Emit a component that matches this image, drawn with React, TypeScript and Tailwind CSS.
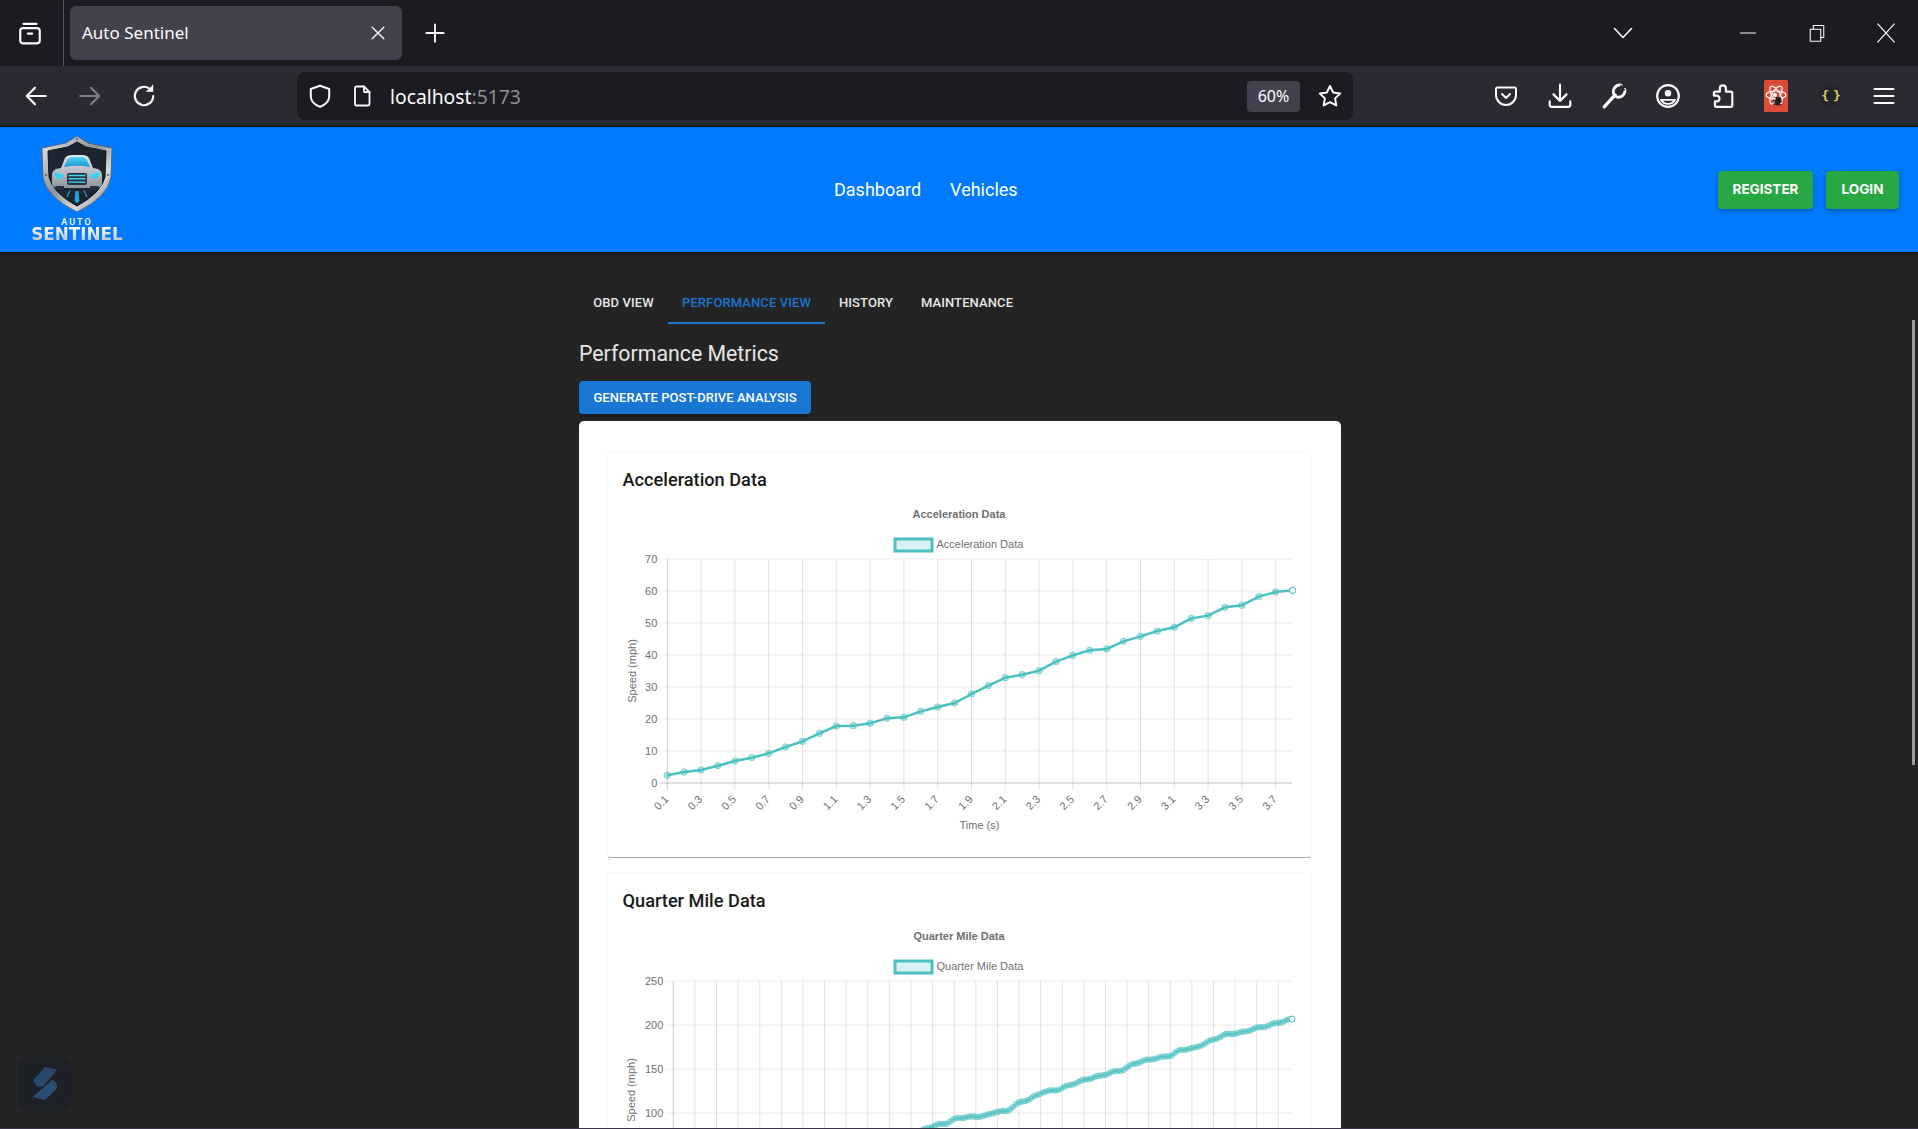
import type { ReactNode } from 'react'

const teal = 'rgb(75,192,192)'
const teal20 = 'rgba(75,192,192,0.2)'

// read off the reference, in page pixels
const accelY = [706, 696, 690, 677, 663, 653, 640, 621, 604, 580, 558, 557, 550, 535, 532, 514, 501, 489, 462, 437, 413, 404, 392, 365, 346, 331, 327, 304, 289, 273, 262, 235, 227, 202, 196, 170, 156, 151].map((v) => 540 + v / 3)
const accelPoints = accelY.map((y, i) => [667.3 + i * 16.9, y])

const quarterAnchors = [
  [905, 1140], [927, 1128], [937, 1125], [947, 1123], [957, 1118], [970, 1117], [985, 1116], [995, 1112], [1007, 1111],
  [1018, 1103], [1030, 1099], [1043, 1092], [1057, 1090], [1070, 1085], [1087, 1079], [1100, 1076], [1113, 1072], [1123, 1070],
  [1133, 1064], [1147, 1060], [1163, 1057], [1172, 1055], [1180, 1050], [1195, 1048], [1210, 1041], [1227, 1034], [1240, 1033],
  [1257, 1028], [1267, 1026], [1277, 1023], [1292, 1019],
]

function interpolate(anchors: number[][], step: number) {
  const out: number[][] = []
  for (let x = anchors[0][0]; x <= 1289; x += step) {
    const i = anchors.findIndex((a) => a[0] >= x)
    const b = anchors[Math.max(i, 1)]
    const a = anchors[Math.max(i, 1) - 1]
    const t = (x - a[0]) / (b[0] - a[0])
    // the real data wobbles a little from point to point
    out.push([x, a[1] + (b[1] - a[1]) * t + Math.sin(x * 1.7) * 0.6])
  }
  out.push([1292, 1019])
  return out
}

const quarterPoints = interpolate(quarterAnchors, 3)

interface ChartProps {
  top: number
  height: number
  labelTop: number
  title: string
  left: number
  yTicks: { label: string; y: number }[]
  xLines: number[]
  xLabels?: string[]
  bottom: number
  axisY: number
  points: number[][]
  lineWidth: number
  lineOpacity: number
  pointRadius: number
}

function LineChart({ top, height, labelTop, title, left, yTicks, xLines, xLabels, bottom, axisY, points, lineWidth, lineOpacity, pointRadius }: ChartProps) {
  const last = points[points.length - 1]
  return (
    <svg width={704} height={height} viewBox={`608 ${top} 704 ${height}`} className="block font-['Liberation_Sans',sans-serif]">
      <text x={959} y={labelTop + 13} textAnchor="middle" fontSize={11} fontWeight={700} fill="#707070">{title}</text>
      <rect x={895} y={labelTop + 34} width={37} height={12} fill={teal20} stroke={teal} strokeWidth={3} />
      <text x={936.5} y={labelTop + 43} fontSize={11} fill="#707070">{title}</text>

      {yTicks.map((t) => (
        <g key={t.label}>
          <line x1={left - 7} x2={1292} y1={t.y} y2={t.y} stroke="rgba(0,0,0,0.07)" />
          {t.y < 1120 && <text x={left - 10} y={t.y + 4} textAnchor="end" fontSize={11} fill="#707070">{t.label}</text>}
        </g>
      ))}
      {xLines.map((x, i) => (
        <g key={x}>
          <line x1={x} x2={x} y1={yTicks[0].y} y2={axisY + 7} stroke={i === 0 ? 'rgba(0,0,0,0.2)' : 'rgba(0,0,0,0.11)'} />
          {xLabels && (
            <text transform={`translate(${x + 2} ${axisY + 17}) rotate(-45)`} textAnchor="end" fontSize={11} fill="#707070">{xLabels[i]}</text>
          )}
        </g>
      ))}
      <line x1={left - 7} x2={1292} y1={axisY} y2={axisY} stroke="rgba(0,0,0,0.18)" />

      <text transform={`translate(${xLabels ? 636 : 635} ${xLabels ? (yTicks[0].y + bottom) / 2 : 1090}) rotate(-90)`} textAnchor="middle" fontSize={11} fill="#707070">Speed (mph)</text>
      {xLabels && <text x={979.5} y={829} textAnchor="middle" fontSize={11} fill="#707070">Time (s)</text>}

      <polyline points={points.map((p) => p.join(',')).join(' ')} fill="none" stroke={teal} strokeWidth={lineWidth} strokeOpacity={lineOpacity} />
      {points.map((p, i) => (
        <circle key={i} cx={p[0]} cy={p[1]} r={pointRadius} fill="rgba(75,192,192,0.45)" stroke={teal} strokeOpacity={0.5} />
      ))}
      <circle cx={last[0]} cy={last[1]} r={3} fill="#fff" stroke={teal} />
    </svg>
  )
}

function ChartPaper({ title, children }: { title: string; children: ReactNode }) {
  return (
    <section className="w-[705px] rounded-[4px] border border-[#f8f8f8] border-b-[#a9a9a9] bg-white">
      <h3 className="ml-[14.500px] mt-[14px] h-[28px] text-[18.200px] font-medium leading-[28px] text-[#1a1a1a]">{title}</h3>
      <div className="mt-[11px] pb-[7px]">{children}</div>
    </section>
  )
}

function ToolIcon({ children, size = 24 }: { children: ReactNode; size?: number }) {
  return (
    <svg width={size} height={size} viewBox="0 0 24 24" fill="none" stroke="currentColor" strokeWidth={2} strokeLinecap="round" strokeLinejoin="round">
      {children}
    </svg>
  )
}

function ToolButton({ children, className = '' }: { children: ReactNode; className?: string }) {
  return <div className={`flex h-[54px] w-[54px] items-center justify-center text-[#fbfbfe] ${className}`}>{children}</div>
}

function ShieldLogo() {
  return (
    <svg width={74} height={78} viewBox="0 0 74 78">
      <defs>
        <linearGradient id="steel" x1="0" y1="0" x2="1" y2="1">
          <stop offset="0" stopColor="#e8ebef" />
          <stop offset="0.45" stopColor="#8d939b" />
          <stop offset="0.7" stopColor="#d6d9dd" />
          <stop offset="1" stopColor="#6c7179" />
        </linearGradient>
        <linearGradient id="glass" x1="0" y1="0" x2="0" y2="1">
          <stop offset="0" stopColor="#55d6f7" />
          <stop offset="1" stopColor="#1f93d4" />
        </linearGradient>
        <linearGradient id="body" x1="0" y1="0" x2="0" y2="1">
          <stop offset="0" stopColor="#e3e6ea" />
          <stop offset="1" stopColor="#8f959d" />
        </linearGradient>
      </defs>
      <path d="M37 1 L48 8 L72 13 L71 42 Q68 62 37 77 Q6 62 3 42 L2 13 L26 8 Z" fill="url(#steel)" stroke="#55595f" strokeWidth={0.8} />
      <path d="M37 7 L46 12 L66 16 L65 42 Q61 58 37 71 Q13 58 9 42 L8 16 L28 12 Z" fill="#1e2530" stroke="#0f131a" strokeWidth={1} />
      <path d="M12 40 Q12 36 16 34 L21 33 L25 23 Q27 20 32 20 H42 Q47 20 49 23 L53 33 L58 34 Q62 36 62 40 V49 Q62 52 57 53 H17 Q12 52 12 49 Z" fill="url(#body)" />
      <path d="M24 32 L27.500 24 Q29 22 32 22 H42 Q45 22 46.500 24 L50 32 Q37 29.500 24 32 Z" fill="url(#glass)" />
      <path d="M14.500 37 L24 39.500 L22 44 L16 43 Q14.500 41 14.500 37 Z M59.500 37 L50 39.500 L52 44 L58 43 Q59.500 41 59.500 37 Z" fill="#3cd0f7" />
      <rect x="27" y="38" width="20" height="12" rx="2" fill="#2a3441" />
      <path d="M28.500 40.500 H45.500 M28.500 43.800 H45.500 M28.500 47.100 H45.500" stroke="#43d2f5" strokeWidth={1.400} />
      <path d="M15 51 H24 V55 H17 Z M50 51 H59 L57 55 H50 Z" fill="#2a303a" />
      <path d="M35.500 56 H38.500 L39.500 66 L37 68 L34.500 66 Z" fill="#1fa6e0" />
      <path d="M30 55.500 L27 62 M44 55.500 L47 62" stroke="#1fa6e0" strokeWidth={1.200} />
      <g fill="#50555c">
        <circle cx="12" cy="15" r="1" /><circle cx="62" cy="15" r="1" /><circle cx="6" cy="40" r="1" /><circle cx="68" cy="40" r="1" /><circle cx="37" cy="4" r="1" />
      </g>
    </svg>
  )
}

export default function App() {
  const accelLines = Array.from({ length: 19 }, (_, i) => 667.3 + i * 33.8)
  const accelLabels = accelLines.map((_, i) => (0.1 + i * 0.2).toFixed(1))
  const quarterLines = Array.from({ length: 29 }, (_, i) => 673.3 + i * 21.607)

  return (
    <div className="relative flex h-[1129px] flex-col overflow-hidden bg-[#242424] font-['Roboto',sans-serif]">
      {/* browser tab strip */}
      <div className="flex h-[66px] shrink-0 items-start bg-[#1c1b22] text-[#fbfbfe]">
        <div className="flex h-[66px] w-[64px] items-center justify-center border-r border-[#55545c] pr-[3px]">
          <ToolIcon size={26}>
            <path d="M6 3.500h12" />
            <rect x="3" y="7.500" width="18" height="14" rx="2.500" />
            <path d="M10 12.500h4" />
          </ToolIcon>
        </div>
        <div className="ml-[6px] mt-[6px] flex h-[54px] w-[332px] items-center justify-between rounded-[6px] bg-[#42414d] pl-[12px] pr-[14px]">
          <span className="font-['Noto_Sans',sans-serif] text-[17px]">Auto Sentinel</span>
          <ToolIcon size={20}><path d="M5 5l14 14M19 5L5 19" strokeWidth={1.600} /></ToolIcon>
        </div>
        <div className="ml-[22px] flex h-[66px] items-center">
          <ToolIcon size={22}><path d="M12 2.500v19M2.500 12h19" /></ToolIcon>
        </div>
        <div className="ml-auto mr-[73px] flex h-[66px] w-[40px] items-center justify-center">
          <ToolIcon size={24}><path d="M3.500 7.500L12 16.500l8.500-9" strokeWidth={1.600} /></ToolIcon>
        </div>
        <div className="flex h-[66px] gap-[5px]">
          <div className="flex w-[64px] items-center justify-center">
            <ToolIcon size={16}><path d="M0.500 12h23" strokeWidth={1.500} /></ToolIcon>
          </div>
          <div className="flex w-[64px] items-center justify-center">
            <ToolIcon size={18}>
              <rect x="3" y="7" width="14" height="16" strokeWidth={1.400} />
              <path d="M7 7V2h14v16h-4" strokeWidth={1.400} />
            </ToolIcon>
          </div>
          <div className="flex w-[64px] items-center justify-center">
            <ToolIcon size={20}><path d="M2 1l20 22M22 1L2 23" strokeWidth={1.400} /></ToolIcon>
          </div>
        </div>
      </div>

      {/* browser toolbar */}
      <div className="flex h-[61px] shrink-0 items-start border-b border-[#0c0c0d] bg-[#2b2a33] pl-[9px] pt-[3px]">
        <ToolButton>
          <ToolIcon size={26}><path d="M21 12H3.500M11 4.500L3.500 12l7.500 7.500" /></ToolIcon>
        </ToolButton>
        <ToolButton className="opacity-40">
          <ToolIcon size={26}><path d="M3 12h17.500M13 4.500l7.500 7.500-7.500 7.500" /></ToolIcon>
        </ToolButton>
        <ToolButton>
          <ToolIcon size={26}>
            <path d="M20.500 12a8.500 8.500 0 1 1-3.300-6.700" />
            <path d="M20 2v5.500h-5.500" fill="currentColor" strokeWidth={1} />
          </ToolIcon>
        </ToolButton>
        <div className="ml-[126px] mt-[3px] flex h-[48px] w-[1056px] items-center rounded-[8px] bg-[#1c1b22] text-[#fbfbfe]">
          <div className="ml-[10px]">
            <ToolIcon size={26}><path d="M12 2.500l8.500 3v7c0 4.500-3.500 7.500-8.500 9.500-5-2-8.500-5-8.500-9.500v-7z" strokeWidth={1.800} /></ToolIcon>
          </div>
          <div className="ml-[17px]">
            <ToolIcon size={24}>
              <path d="M6.500 2.500H14L19.500 8v12a1.500 1.500 0 0 1-1.500 1.500H6.500A1.500 1.500 0 0 1 5 20V4a1.500 1.500 0 0 1 1.500-1.500z" strokeWidth={1.800} />
              <path d="M14 2.500V8h5.500" strokeWidth={1.800} />
            </ToolIcon>
          </div>
          <span className="ml-[16px] pt-[2px] font-['Noto_Sans',sans-serif] text-[19.300px] leading-none">
            localhost<span className="text-[#8f8f94]">:5173</span>
          </span>
          <span className="ml-auto flex h-[31px] w-[53px] items-center justify-center rounded-[4px] bg-[#42414d] font-['Noto_Sans',sans-serif] text-[16px]">60%</span>
          <div className="ml-[17px] mr-[10px]">
            <ToolIcon size={26}><path d="M12 2.800l2.900 6 6.500.9-4.700 4.500 1.100 6.500L12 17.600l-5.800 3.100 1.100-6.500-4.700-4.500 6.500-.9z" strokeWidth={1.800} /></ToolIcon>
          </div>
        </div>
        <div className="ml-auto flex pr-[7px]">
          <ToolButton>
            <ToolIcon size={24}>
              <path d="M3.500 3.500h17a1.500 1.500 0 0 1 1.500 1.500v6a10 10 0 0 1-20 0V5a1.500 1.500 0 0 1 1.500-1.500z" />
              <path d="M8 10l4 4 4-4" />
            </ToolIcon>
          </ToolButton>
          <ToolButton>
            <ToolIcon size={26}>
              <path d="M12 1.500V16M6 10.500l6 6 6-6" />
              <path d="M2.500 17v3a2 2 0 0 0 2 2h15a2 2 0 0 0 2-2v-3" />
            </ToolIcon>
          </ToolButton>
          <ToolButton>
            <ToolIcon size={26}>
              <path d="M3 22L13 11" strokeWidth={3} />
              <path d="M18.500 2a6 6 0 0 0-6.500 8.500M22 6a6 6 0 0 1-8.500 6.500" strokeWidth={2.600} />
              <path d="M18.500 2L17 6l2 2 3-2" strokeWidth={1} fill="#2b2a33" stroke="#2b2a33" />
            </ToolIcon>
          </ToolButton>
          <ToolButton>
            <ToolIcon size={26}>
              <circle cx="12" cy="12" r="10" />
              <circle cx="12" cy="9.500" r="3" fill="currentColor" stroke="none" />
              <path d="M5.500 15.500h13a7.500 7.500 0 0 1-13 0z" strokeWidth={1.600} />
            </ToolIcon>
          </ToolButton>
          <ToolButton>
            <ToolIcon size={26}>
              <path d="M6 8h4V5a2.800 2.800 0 0 1 5.600 0v3H20a1.500 1.500 0 0 1 1.500 1.500V21a1 1 0 0 1-1 1H7a1.500 1.500 0 0 1-1.500-1.500V17H7a2.700 2.700 0 0 0 0-5.400H4.500V9.500A1.500 1.500 0 0 1 6 8z" />
            </ToolIcon>
          </ToolButton>
          <ToolButton>
            <svg width={24} height={32} viewBox="0 0 24 32">
              <rect width="24" height="32" rx="1.500" fill="#dd4b39" />
              <g fill="none" stroke="#fff" strokeWidth={1.200}>
                <ellipse cx="12" cy="15" rx="10" ry="4" />
                <ellipse cx="12" cy="15" rx="10" ry="4" transform="rotate(60 12 15)" />
                <ellipse cx="12" cy="15" rx="10" ry="4" transform="rotate(120 12 15)" />
              </g>
              <circle cx="11" cy="15" r="2" fill="#fff" />
              <ellipse cx="14" cy="21" rx="3" ry="4.500" fill="#222" transform="rotate(25 14 21)" />
              <path d="M9 20l9 2M9 24l9 1M12 17l4 8" stroke="#222" strokeWidth={1} />
            </svg>
          </ToolButton>
          <ToolButton>
            <span className="flex h-[22px] w-[22px] items-center justify-center rounded-full bg-[#25262a] font-['DejaVu_Sans_Mono',monospace] text-[13px] font-bold tracking-[-2px] text-[#d8d06c]">{'{ }'}</span>
          </ToolButton>
          <ToolButton>
            <ToolIcon size={24}><path d="M2.500 5h19M2.500 12h19M2.500 19h19" /></ToolIcon>
          </ToolButton>
        </div>
      </div>

      {/* site header */}
      <header className="z-10 flex h-[125px] shrink-0 items-center bg-[#007bff] pl-[31px] pr-[19px] shadow-[0_2px_4px_rgba(0,0,0,0.45)]">
        <div className="flex w-[92px] flex-col items-center pb-[3px]">
          <ShieldLogo />
          <span className="mt-[4px] text-[9px] font-medium leading-[10px] tracking-[2px] text-white">AUTO</span>
          <span className="whitespace-nowrap bg-gradient-to-b from-white to-[#b9c0c7] bg-clip-text font-['DejaVu_Sans',sans-serif] text-[16.800px] font-bold leading-[15px] text-transparent">SENTINEL</span>
        </div>
        <nav className="ml-[711px] flex items-center gap-[29px] text-[18px] text-white">
          <a>Dashboard</a>
          <a>Vehicles</a>
        </nav>
        <div className="ml-auto flex gap-[13px] font-['Inter',sans-serif] text-[13.500px] font-bold text-white">
          <button className="h-[38px] w-[95px] rounded-[4px] bg-[#28a745] shadow-[0_2px_4px_rgba(0,0,0,0.3)]">REGISTER</button>
          <button className="h-[38px] w-[73px] rounded-[4px] bg-[#28a745] shadow-[0_2px_4px_rgba(0,0,0,0.3)]">LOGIN</button>
        </div>
      </header>

      <main className="min-h-0 flex-1 overflow-hidden">
        <div className="ml-[579px] w-[762px]">
          <div className="mt-[30px] flex h-[42px] text-[13px] font-medium tracking-[0.1px] text-[#e6e6e6]">
            <span className="flex w-[89px] items-center justify-center">OBD VIEW</span>
            <span className="flex w-[157px] items-center justify-center border-b-2 border-[#1976d2] pt-[2px] text-[#1976d2]">PERFORMANCE VIEW</span>
            <span className="flex w-[82px] items-center justify-center">HISTORY</span>
            <span className="flex w-[120px] items-center justify-center">MAINTENANCE</span>
          </div>
          <h2 className="mt-[15px] text-[21.300px] leading-[29px] text-[#e6e6e6]">Performance Metrics</h2>
          <button className="mt-[13px] h-[33px] w-[232px] rounded-[4px] bg-[#1976d2] text-[13px] font-medium tracking-[0.05px] text-white shadow-[0_2px_3px_rgba(0,0,0,0.3)]">
            GENERATE POST-DRIVE ANALYSIS
          </button>
          <div className="mt-[7px] h-[760px] rounded-t-[5px] bg-white pl-[28px] pt-[30px]">
            <ChartPaper title="Acceleration Data">
              <LineChart
                top={505}
                height={345}
                labelTop={505}
                title="Acceleration Data"
                left={667.3}
                yTicks={[70, 60, 50, 40, 30, 20, 10, 0].map((v) => ({ label: String(v), y: 783 - v * 3.2 }))}
                xLines={accelLines}
                xLabels={accelLabels}
                bottom={783}
                axisY={783}
                points={accelPoints}
                lineWidth={2.500}
                lineOpacity={1}
                pointRadius={3.300}
              />
            </ChartPaper>
            <div className="mt-[14px]">
              <ChartPaper title="Quarter Mile Data">
                <LineChart
                  top={926}
                  height={345}
                  labelTop={927}
                  title="Quarter Mile Data"
                  left={673.3}
                  yTicks={[250, 200, 150, 100, 50, 0].map((v) => ({ label: String(v), y: 1201 - v * 0.88 }))}
                  xLines={quarterLines}
                  bottom={1199}
                  axisY={1201}
                  points={quarterPoints}
                  lineWidth={2}
                  lineOpacity={0.6}
                  pointRadius={2.800}
                />
              </ChartPaper>
            </div>
          </div>
        </div>
      </main>

      {/* window bottom edge */}
      <div className="h-px shrink-0 bg-[#3d3548]" />

      {/* overlay scrollbar */}
      <div className="absolute left-[1912px] top-[320px] h-[445px] w-[3px] bg-[#9b9b9b]" />

      {/* floating helper badge */}
      <div className="absolute left-[18px] top-[1057px] flex h-[54px] w-[54px] items-center justify-center rounded-[10px] bg-[#1e2027]">
        <svg width={30} height={36} viewBox="95 75 80 110">
          <path d="M135 78 L172 86 L130 138 Q110 142 102 126 Q98 116 106 110 Z" fill="#28496c" />
          <path d="M158 117 Q174 126 172 142 L135 180 L97 170 Z" fill="#2a4e74" />
        </svg>
      </div>
    </div>
  )
}
